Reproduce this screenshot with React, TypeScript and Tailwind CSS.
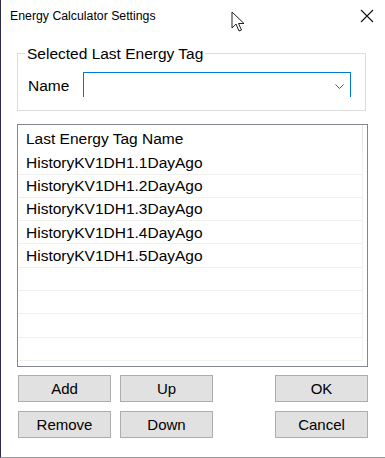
const rows = [
  "HistoryKV1DH1.1DayAgo",
  "HistoryKV1DH1.2DayAgo",
  "HistoryKV1DH1.3DayAgo",
  "HistoryKV1DH1.4DayAgo",
  "HistoryKV1DH1.5DayAgo",
  "",
  "",
  "",
  "",
];

const WinButton = ({ label }: { label: string }) => (
  <button className="w-[93px] h-[27px] bg-[#e1e1e1] border border-[#adadad] text-[15px] text-black leading-none">
    {label}
  </button>
);

export default function App() {
  return (
    <div
      className="relative w-[385px] h-[458px] bg-white border-l border-[#2b2b4a] border-b border-b-[#9a9a9a] overflow-hidden text-black"
      style={{ fontFamily: '"Liberation Sans", Arial, sans-serif' }}
    >
      {/* title bar */}
      <div className="h-[32px] flex items-center justify-between pl-[9px] pr-[11px]">
        <span className="text-[12.3px]">Energy Calculator Settings</span>
        <svg width="14" height="14" viewBox="0 0 14 14">
          <path d="M1 1 L13 13 M13 1 L1 13" stroke="#111" strokeWidth="1.1" fill="none" />
        </svg>
      </div>

      {/* mouse pointer */}
      <svg className="absolute left-[230px] top-[11px]" width="16" height="22" viewBox="0 0 16 22">
        <path
          d="M1 1 L1 17 L5 13 L8 20 L10.5 19 L7.5 12.5 L13 12.5 Z"
          fill="white"
          stroke="#222"
          strokeWidth="1"
          strokeLinejoin="round"
        />
      </svg>

      <div className="px-[16px]">
        {/* group box */}
        <fieldset className="mt-[13px] w-[349px] border border-[#dcdcdc] pl-[10px] pr-[14px] pt-[10px] pb-[13px]">
          <legend className="ml-[-3px] px-[2px] text-[15.5px] leading-[17px]">Selected Last Energy Tag</legend>
          <div className="flex items-center">
            <span className="w-[55px] text-[15.5px] mt-[2px]">Name</span>
            <div className="relative h-[25px] w-[268px] border border-b-0 border-[#0078d7] bg-white">
              <svg className="absolute right-[6px] top-[11px]" width="9" height="5" viewBox="0 0 9 5">
                <path d="M0.5 0.5 L4.5 4.5 L8.5 0.5" stroke="#555" strokeWidth="1" fill="none" />
              </svg>
            </div>
          </div>
        </fieldset>

        {/* list view */}
        <div className="mt-[13px] w-[351px] h-[243px] border border-[#828790] bg-white flex flex-col">
          <div className="h-[26px] w-[345px] flex items-center pl-[8px] border-r border-[#e5e5e5] text-[15.5px]">
            Last Energy Tag Name
          </div>
          {rows.map((r, i) => (
            <div
              key={i}
              className="h-[23.3px] w-[345px] flex items-center pl-[8px] border-b border-r border-[#f0f0f0] text-[15.5px] leading-none"
            >
              {r}
            </div>
          ))}
        </div>

        {/* buttons */}
        <div className="mt-[8px] flex flex-col gap-[9px]">
          <div className="flex">
            <div className="ml-[1px] flex gap-[9px]">
              <WinButton label="Add" />
              <WinButton label="Up" />
            </div>
            <div className="ml-auto mr-[1px]">
              <WinButton label="OK" />
            </div>
          </div>
          <div className="flex">
            <div className="ml-[1px] flex gap-[9px]">
              <WinButton label="Remove" />
              <WinButton label="Down" />
            </div>
            <div className="ml-auto mr-[1px]">
              <WinButton label="Cancel" />
            </div>
          </div>
        </div>
      </div>
    </div>
  );
}
